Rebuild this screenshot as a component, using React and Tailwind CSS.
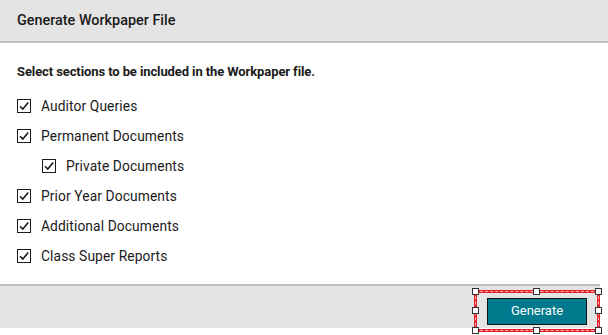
import React from "react";

const SECTIONS = [
  { label: "Auditor Queries", level: 0 },
  { label: "Permanent Documents", level: 0 },
  { label: "Private Documents", level: 1 },
  { label: "Prior Year Documents", level: 0 },
  { label: "Additional Documents", level: 0 },
  { label: "Class Super Reports", level: 0 },
];

function CheckBox() {
  return (
    <span className="w-[14px] h-[14px] border border-[#1a1a1a] bg-white flex items-center justify-center flex-shrink-0">
      <svg width="12" height="12" viewBox="0 0 12 12">
        <path d="M2 6.2 L4.8 9 L10.2 2.6" fill="none" stroke="#1a1a1a" strokeWidth="1.6" />
      </svg>
    </span>
  );
}

function Handle({ className }) {
  return (
    <span
      className={`absolute w-[7px] h-[7px] bg-white border border-[#333] ${className}`}
    />
  );
}

export default function App() {
  return (
    <div
      className="w-[608px] h-[335px] bg-white text-[#1a1a1a] flex flex-col"
      style={{ fontFamily: "Roboto, 'Liberation Sans', sans-serif" }}
    >
      {/* Header */}
      <div className="h-[43px] bg-[#e4e4e4] border-b-2 border-[#c0c0c0] flex items-center px-[17px] flex-shrink-0">
        <span className="text-[14.4px] font-medium">Generate Workpaper File</span>
      </div>

      {/* Body */}
      <div className="h-[241px] px-[17px] pt-[19px] flex flex-col flex-shrink-0">
        <p className="text-[13px] font-bold leading-[20px] tracking-[-0.1px]">
          Select sections to be included in the Workpaper file.
        </p>
        <div className="mt-[9px] flex flex-col">
          {SECTIONS.map((s) => (
            <label
              key={s.label}
              className={`h-[30px] flex items-center gap-[10px] text-[13.8px] tracking-[0.1px] ${
                s.level ? "pl-[25px]" : ""
              }`}
            >
              <CheckBox />
              <span>{s.label}</span>
            </label>
          ))}
        </div>
      </div>

      {/* Footer */}
      <div className="h-[44px] mr-[8px] bg-[#e4e4e4] border-t-2 border-[#c0c0c0] flex items-center justify-end flex-shrink-0">
        <div className="relative w-[126px] h-[42px] mt-[8px] border-[3px] border-[#e5202a] flex items-center justify-center">
          <span className="absolute inset-[-2px] border border-dashed border-[#ffb0b0]" />
          <button className="w-[100px] h-[27px] bg-[#007a8c] border border-[#111] text-white text-[13px]">
            Generate
          </button>
          <Handle className="-top-[5px] -left-[5px]" />
          <Handle className="-top-[5px] left-[56px]" />
          <Handle className="-top-[5px] -right-[5px]" />
          <Handle className="top-[14px] -left-[5px]" />
          <Handle className="top-[14px] -right-[5px]" />
          <Handle className="-bottom-[5px] -left-[5px]" />
          <Handle className="-bottom-[5px] left-[56px]" />
          <Handle className="-bottom-[5px] -right-[5px]" />
        </div>
      </div>
    </div>
  );
}
